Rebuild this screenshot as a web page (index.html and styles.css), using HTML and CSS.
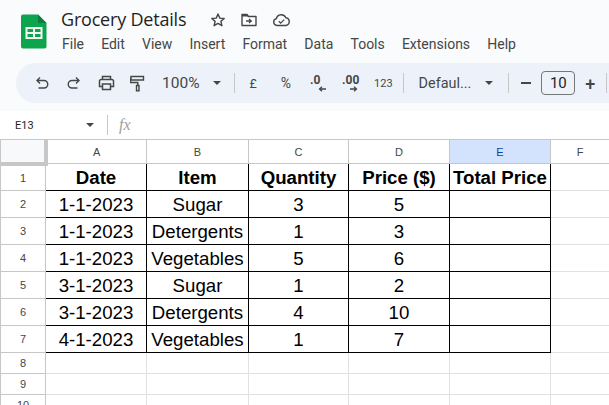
FILE: index.html
```html
<!DOCTYPE html>
<html lang="en">
<head>
<meta charset="utf-8">
<title>Grocery Details</title>
<link rel="stylesheet" href="styles.css">
</head>
<body>
<header class="head">
  <svg class="logo" width="26" height="35" viewBox="0 0 26 35">
    <path d="M2 0.5H17L25.5 9V32.5a2 2 0 0 1-2 2H2a2 2 0 0 1-2-2V2.500a2 2 0 0 1 2-2z" fill="#0da44e"/>
    <path d="M17 .5L25.500 9H17z" fill="#0b7d3e"/>
    <path d="M4.500 13H21.500V25H4.500zM6.500 15V18H12V15zM14 15V18H19.500V15zM6.500 20V23H12V20zM14 20V23H19.500V20z" fill="#f1f8f3" fill-rule="evenodd"/>
  </svg>
  <div class="titles">
    <div class="title-row">
      <span class="doc-title">Grocery Details</span>
      <span class="title-icons">
        <svg width="16" height="16" viewBox="0 0 16 16"><path d="M8 2l1.800 4.100 4.400.4-3.300 2.900 1 4.300L8 11.400l-3.900 2.300 1-4.300L1.800 6.500l4.400-.4z" fill="none" stroke="#444746" stroke-width="1.400" stroke-linejoin="round"/></svg>
        <svg width="18" height="16" viewBox="0 0 18 16"><path d="M2 2.500V13.500H16V4.500H8.500L7 2.500z" fill="#fff" stroke="#444746" stroke-width="1.400" stroke-linejoin="round"/><path d="M2 2.500H7L8.500 4.500H2z" fill="#444746"/><path d="M6 9H11M9 7l2.300 2L9 11" fill="none" stroke="#444746" stroke-width="1.300"/></svg>
        <svg width="19" height="16" viewBox="0 0 19 16"><path d="M5 13.500a3.500 3.500 0 0 1-.6-6.900 5 5 0 0 1 9.500-.8 3.900 3.900 0 0 1 .1 7.700z" fill="none" stroke="#444746" stroke-width="1.400"/><path d="M6.800 9.300l1.900 1.800 3.500-3.500" fill="none" stroke="#444746" stroke-width="1.300"/></svg>
      </span>
    </div>
    <nav class="menu">
      <span>File</span><span>Edit</span><span>View</span><span>Insert</span><span>Format</span><span>Data</span><span>Tools</span><span>Extensions</span><span>Help</span>
    </nav>
  </div>
</header>
<div class="head-rest">
  <div class="toolbar">
    <svg class="ic ic-undo" width="16" height="16" viewBox="0 0 16 16"><path d="M6 2.500L3 5.500l3 3M3.500 5.500H10a3.300 3.300 0 0 1 0 7.500H4.500" fill="none" stroke="#444746" stroke-width="1.400"/></svg>
    <svg class="ic ic-redo" width="16" height="16" viewBox="0 0 16 16"><path d="M10 2.500l3 3-3 3M12.500 5.500H6a3.300 3.300 0 0 0 0 7.500h5.500" fill="none" stroke="#444746" stroke-width="1.400"/></svg>
    <svg class="ic ic-print" width="17" height="16" viewBox="0 0 17 16"><path d="M4.500 4.500V1.500H12.500V4.500M4.500 11.500H1.500V6a1.500 1.500 0 0 1 1.500-1.500H14A1.500 1.500 0 0 1 15.500 6V11.500H12.500M4.500 9H12.500V14.500H4.500z" fill="none" stroke="#444746" stroke-width="1.500"/></svg>
    <svg class="ic ic-paint" width="15" height="17" viewBox="0 0 15 17"><path d="M1 1.500H13.500V5H1zM1 3.200H.5V7.500H7.800V10.500M6.500 10.500H9V15.800H6.500z" fill="none" stroke="#444746" stroke-width="1.400"/></svg>
    <span class="zoom-val">100%</span><span class="caret caret-zoom"></span>
    <span class="sep sep-a"></span>
    <span class="tb tb-pound">£</span>
    <span class="tb tb-pct">%</span>
    <span class="dec dec-less">.0<svg width="8" height="6" viewBox="0 0 8 6"><path d="M8 3H2M4 .8L1.500 3 4 5.200" fill="none" stroke="#444746" stroke-width="1.300"/></svg></span>
    <span class="dec dec-more">.00<svg width="8" height="6" viewBox="0 0 8 6"><path d="M0 3H6M4 .8L6.500 3 4 5.200" fill="none" stroke="#444746" stroke-width="1.300"/></svg></span>
    <span class="tb tb-123">123</span>
    <span class="sep sep-b"></span>
    <span class="font-name">Defaul...</span><span class="caret caret-font"></span>
    <span class="sep sep-c"></span>
    <span class="minus"></span>
    <span class="size">10</span>
    <span class="plus">+</span>
    <span class="sep sep-d"></span>
  </div>
</div>
<div class="formula">
  <span class="cell-ref">E13</span><span class="caret caret-ref"></span>
  <span class="sep sep-f"></span>
  <span class="fx">fx</span>
</div>
<table class="sheet">
  <colgroup><col class="c0"><col class="ca"><col class="cb"><col class="cc"><col class="cd"><col class="ce"><col class="cf"></colgroup>
  <thead>
    <tr><th class="corner"></th><th>A</th><th>B</th><th>C</th><th>D</th><th class="active">E</th><th>F</th></tr>
  </thead>
  <tbody>
    <tr class="bold"><th>1</th><td class="d">Date</td><td class="d">Item</td><td class="d">Quantity</td><td class="d">Price ($)</td><td class="d">Total Price</td><td></td></tr>
    <tr><th>2</th><td class="d">1-1-2023</td><td class="d">Sugar</td><td class="d">3</td><td class="d">5</td><td class="d"></td><td></td></tr>
    <tr><th>3</th><td class="d">1-1-2023</td><td class="d">Detergents</td><td class="d">1</td><td class="d">3</td><td class="d"></td><td></td></tr>
    <tr><th>4</th><td class="d">1-1-2023</td><td class="d">Vegetables</td><td class="d">5</td><td class="d">6</td><td class="d"></td><td></td></tr>
    <tr><th>5</th><td class="d">3-1-2023</td><td class="d">Sugar</td><td class="d">1</td><td class="d">2</td><td class="d"></td><td></td></tr>
    <tr><th>6</th><td class="d">3-1-2023</td><td class="d">Detergents</td><td class="d">4</td><td class="d">10</td><td class="d"></td><td></td></tr>
    <tr><th>7</th><td class="d">4-1-2023</td><td class="d">Vegetables</td><td class="d">1</td><td class="d">7</td><td class="d"></td><td></td></tr>
    <tr class="thin"><th>8</th><td></td><td></td><td></td><td></td><td></td><td></td></tr>
    <tr class="thin"><th>9</th><td></td><td></td><td></td><td></td><td></td><td></td></tr>
    <tr class="thin"><th>10</th><td></td><td></td><td></td><td></td><td></td><td></td></tr>
  </tbody>
</table>
</body>
</html>
```
FILE: styles.css
```css
html, body { margin: 0; padding: 0; }
body {
  width: 609px; height: 405px; overflow: hidden;
  background: #fff; color: #444746;
  font-family: Roboto, "Liberation Sans", sans-serif;
}
svg { display: block; flex: none; }

.head {
  height: 63px; box-sizing: border-box;
  background: #f9fbfd;
  display: flex; align-items: flex-start;
  padding: 14px 0 0 21px;
}
.logo { margin-right: 14px; }
.titles { margin-top: -6px; }
.title-row { display: flex; align-items: center; height: 24px; }
.doc-title { font-size: 18px; color: #1f1f1f; font-family: "Open Sans", Roboto, sans-serif; letter-spacing: -.2px; padding-bottom: 3px; }
.title-icons { display: flex; align-items: center; gap: 14px; margin-left: 24px; }
.menu { display: flex; gap: 17.15px; margin-top: 4px; font-size: 14px; color: #444746; line-height: 16px; padding-left: 1px; }

.head-rest { background: #f9fbfd; height: 48px; padding-left: 16px; }
.toolbar {
  height: 40px; background: #edf2fa;
  border-radius: 20px 0 0 20px;
  display: flex; align-items: center;
}
.ic-undo { margin-left: 18px; }
.ic-redo { margin-left: 16px; }
.ic-print { margin-left: 16px; }
.ic-paint { margin-left: 15px; }
.zoom-val { font-size: 15.5px; margin-left: 17px; }
.caret { width: 0; height: 0; border: 4px solid transparent; border-top: 4px solid #444746; border-bottom: 0; flex: none; }
.caret-zoom { margin-left: 13px; }
.sep { width: 1px; height: 20px; background: #c7c7c7; flex: none; }
.sep-a { margin-left: 13px; }
.tb { font-size: 12.5px; }
.tb-pound { margin-left: 15px; }
.tb-pct { margin-left: 24px; font-size: 14px; }
.dec { width: 16px; font-size: 12px; font-weight: 700; line-height: 11px; display: flex; flex-direction: column; align-items: flex-start; flex: none; }
.dec svg { align-self: flex-end; }
.dec-less { margin-left: 19px; }
.dec-more { margin-left: 16px; }
.tb-123 { margin-left: 16px; font-size: 11px; }
.sep-b { margin-left: 10px; }
.font-name { font-size: 14.4px; margin-left: 15px; }
.caret-font { margin-left: 14px; }
.sep-c { margin-left: 15px; }
.minus { width: 10px; height: 2px; background: #444746; margin-left: 12px; flex: none; }
.size { box-sizing: border-box; width: 34px; height: 24px; border: 1px solid #747775; border-radius: 4px; text-align: center; font-size: 15px; line-height: 22px; margin-left: 10px; color: #1f1f1f; flex: none; }
.plus { font-size: 18px; font-weight: 500; margin-left: 9px; width: 12px; text-align: center; }
.sep-d { margin-left: 10px; }

.formula { height: 28px; display: flex; align-items: center; background: #fff; box-sizing: border-box; padding-left: 15px; }
.cell-ref { font-size: 11px; width: 71px; color: #1f1f1f; }
.sep-f { margin-left: 13px; }
.fx { font-family: "Liberation Serif", serif; font-style: italic; font-size: 16px; color: #a0a0a0; margin-left: 11px; }

.sheet {
  table-layout: fixed; border-collapse: collapse;
  width: 609px;
  font-family: "Liberation Sans", Arial, sans-serif;
}
.c0 { width: 45px; }
.ca { width: 101px; }
.cb { width: 102px; }
.cc { width: 100px; }
.cd { width: 101px; }
.ce { width: 101px; }
.cf { width: 59px; }
.sheet th {
  font-weight: 400; font-size: 11px; color: #444746;
  border: 1px solid #c7c7c7; padding: 0; text-align: center;
  background: #fff;
}
thead tr { height: 24px; }
tbody tr { height: 27px; }
tbody tr.thin { height: 21px; }
.sheet td { border: 1px solid #e1e1e1; padding: 1px 0 0; font-size: 18.67px; line-height: 20px; text-align: center; color: #000; white-space: nowrap; overflow: hidden; }
.sheet td.d { border: 1px solid #000; }
.bold td { font-weight: 700; }
.sheet th.corner { background: #f8f9fa; border-right: 4px solid #c7c7c7; border-bottom: 4px solid #c7c7c7; }
.sheet th.active { background: #d3e3fd; color: #0842a0; }
```
